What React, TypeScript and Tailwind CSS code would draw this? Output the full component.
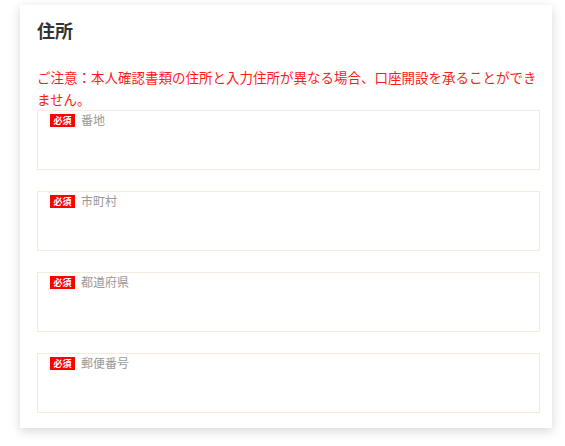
const FIELDS = ["番地", "市町村", "都道府県", "郵便番号"];

function AddressField({ label }: { label: string }) {
  return (
    <div className="h-[60px] border border-[#f3ebdc] bg-white pl-[12px] pt-px">
      <div className="flex items-center gap-[6px]">
        <span className="flex h-[13px] w-[25px] items-center justify-center bg-[#ff0000] text-[9px] leading-none font-bold text-white">
          必須
        </span>
        <span className="text-[12px] leading-[16px] text-[#999999]">{label}</span>
      </div>
    </div>
  );
}

export default function App() {
  return (
    <div
      className="h-[446px] w-[565px] bg-white pt-[5px] pl-[20px]"
      style={{ fontFamily: '"Noto Sans CJK JP", "Noto Sans", sans-serif' }}
    >
      <div className="w-[532px] bg-white pt-[13px] pr-[12px] pb-[15px] pl-[17px] shadow-[0_3px_10px_rgba(0,0,0,0.16)]">
        <h2 className="text-[18px] leading-[24px] font-bold text-[#333333]">住所</h2>
        <p className="mt-[24px] text-[13.5px] leading-[22px] text-[#ff1a1a]">
          ご注意：本人確認書類の住所と入力住所が異なる場合、口座開設を承ることができません。
        </p>
        <div className="flex flex-col gap-[21px]">
          {FIELDS.map((f) => (
            <AddressField key={f} label={f} />
          ))}
        </div>
      </div>
    </div>
  );
}
